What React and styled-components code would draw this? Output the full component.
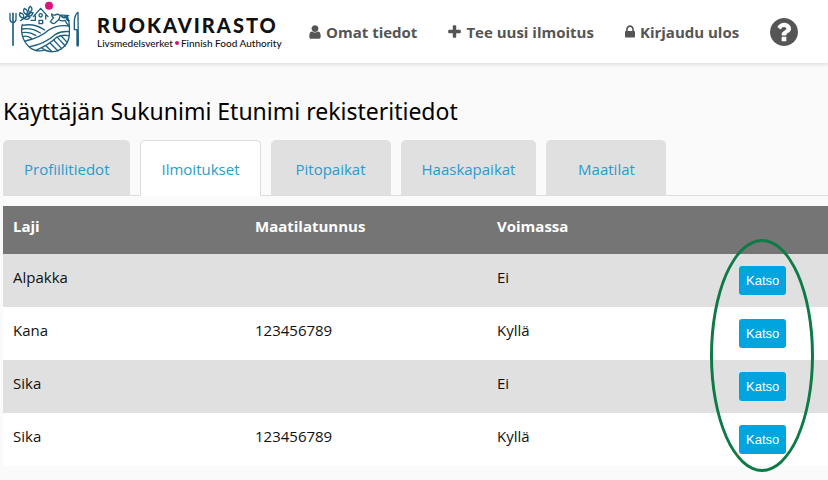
import React from "react";
import styled, { createGlobalStyle } from "styled-components";

const GlobalStyle = createGlobalStyle`
  * { box-sizing: border-box; }
  body {
    margin: 0;
    background: #fafafa;
    color: #111;
    font-family: "Open Sans", "Noto Sans", sans-serif;
    font-size: 15px;
    line-height: 24px;
  }
`;

const Header = styled.header`
  display: flex;
  align-items: center;
  gap: 32px;
  height: 63px;
  padding: 0 8px;
  background: #fff;
  box-shadow: 0 1px 3px 1px #e2e2e2;
`;

const Brand = styled.a`
  display: flex;
  align-items: center;
  gap: 17px;
  color: #111;
  text-decoration: none;
`;

const Emblem = styled.svg`
  width: 72px;
  height: 53px;
  margin-bottom: 8px;
  fill: none;
  stroke: #1d5f80;
  stroke-width: 4;
  stroke-linecap: round;
  stroke-linejoin: round;
`;

const BrandText = styled.span`
  display: flex;
  flex-direction: column;
  width: 180px;
  padding-top: 2px;
  font-family: Lato, sans-serif;
  white-space: nowrap;
`;

const BrandName = styled.span`
  font-size: 20px;
  font-weight: 900;
  line-height: 20px;
  letter-spacing: 2px;
`;

const BrandSub = styled.span`
  display: flex;
  align-items: center;
  gap: 2px;
  font-size: 10px;
  font-weight: 500;
  line-height: 16px;
`;

const Dot = styled.span`
  flex: none;
  width: 4px;
  height: 4px;
  border-radius: 50%;
  background: #d4146e;
`;

const Nav = styled.nav`
  display: flex;
  align-items: center;
  gap: 31px;
`;

const NavLink = styled.a`
  display: flex;
  align-items: center;
  gap: 5px;
  color: #555;
  font-weight: 700;
  text-decoration: none;
  white-space: nowrap;
`;

const Glyph = styled.svg`
  width: ${(p) => p.$width}px;
  height: ${(p) => p.$height}px;
  fill: currentColor;
`;

const Main = styled.main`
  padding: 32px 0 14px 3px;
`;

const Title = styled.h1`
  margin: 0;
  color: #000;
  font-family: "Noto Sans", sans-serif;
  font-size: 23px;
  font-weight: 400;
  line-height: 32px;
`;

const Tabs = styled.div`
  display: flex;
  gap: 10px;
  margin-top: 13px;
  border-bottom: 1px solid #ddd;
`;

const Tab = styled.button`
  min-width: 120px;
  height: 56px;
  margin-bottom: -1px;
  padding: 2px 20px 0;
  border: 1px solid ${(p) => (p.$active ? "#ddd" : "#e0e0e0")};
  border-bottom-color: ${(p) => (p.$active ? "#fff" : "#ddd")};
  border-radius: 5px 5px 0 0;
  background: ${(p) => (p.$active ? "#fff" : "#e0e0e0")};
  color: #2b9bcb;
  font: inherit;
  cursor: pointer;
`;

const TableArea = styled.div`
  position: relative;
  margin-top: 10px;
`;

const Table = styled.table`
  width: 100%;
  table-layout: fixed;
  border-collapse: collapse;
`;

const Column = styled.col`
  width: ${(p) => (p.$rest ? "auto" : "242px")};
`;

const HeadCell = styled.th`
  height: 48px;
  padding: 8px 10px;
  background: #757575;
  color: #fff;
  font-weight: 700;
  text-align: left;
  vertical-align: top;
`;

const Row = styled.tr`
  height: 53px;
  background: #fff;
  &:nth-child(odd) { background: #e0e0e0; }
`;

const Cell = styled.td`
  padding: ${(p) => (p.$action ? 12 : 11)}px 10px;
  vertical-align: top;
`;

const ViewButton = styled.button`
  display: block;
  height: 29px;
  padding: 0 7px;
  border: 0;
  border-radius: 3px;
  background: #00a5df;
  color: #fff;
  font-family: "Liberation Sans", Arial, sans-serif;
  font-size: 13px;
  cursor: pointer;
`;

const Highlight = styled.div`
  position: absolute;
  top: 33px;
  left: 707px;
  width: 104px;
  height: 233px;
  border: 3px solid #0c7b45;
  border-radius: 50%;
  pointer-events: none;
`;

const icons = {
  user: {
    box: "256 0 1280 1792",
    width: 12,
    d: "M1536 1399q0 109-62.5 187t-150.5 78h-854q-88 0-150.5-78t-62.5-187q0-85 8.5-160.5t31.5-152 58.5-131 94-89 134.5-34.5q131 128 313 128t313-128q76 0 134.5 34.5t94 89 58.5 131 31.5 152 8.5 160.5zm-256-887q0 159-112.5 271.5t-271.5 112.5-271.5-112.5-112.5-271.5 112.5-271.5 271.5-112.5 271.5 112.5 112.5 271.5z",
  },
  plus: {
    box: "192 0 1408 1792",
    width: 13,
    d: "M1600 736v192q0 40-28 68t-68 28h-416v416q0 40-28 68t-68 28h-192q-40 0-68-28t-28-68v-416h-416q-40 0-68-28t-28-68v-192q0-40 28-68t68-28h416v-416q0-40 28-68t68-28h192q40 0 68 28t28 68v416h416q40 0 68 28t28 68z",
  },
  lock: {
    box: "320 0 1152 1792",
    width: 10,
    d: "M640 768h512v-192q0-106-75-181t-181-75-181 75-75 181v192zm832 96v576q0 40-28 68t-68 28h-960q-40 0-68-28t-28-68v-576q0-40 28-68t68-28h32v-192q0-184 132-316t316-132 316 132 132 316v192h32q40 0 68 28t28 68z",
  },
  help: {
    box: "128 128 1536 1536",
    width: 28,
    height: 28,
    d: "M1024 1376v-192q0-14-9-23t-23-9h-192q-14 0-23 9t-9 23v192q0 14 9 23t23 9h192q14 0 23-9t9-23zm256-672q0-88-55.5-163t-138.5-116-170-41q-243 0-371 213-15 24 8 42l132 100q7 6 19 6 16 0 25-12 53-68 86-92 34-24 86-24 48 0 85.5 26t37.5 59q0 38-20 61t-68 45q-63 28-115.5 86.5t-52.5 125.5v36q0 14 9 23t23 9h192q14 0 23-9t9-23q0-19 21.5-49.5t54.5-49.5q32-18 49-28.5t46-35 44.5-48 28-60.5 12.5-81zm384 192q0 209-103 385.5t-279.5 279.5-385.5 103-385.5-103-279.5-279.5-103-385.5 103-385.5 279.5-279.5 385.5-103 385.5 103 279.5 279.5 103 385.5z",
  },
};

function Icon({ name }) {
  const { box, width, height = 16, d } = icons[name];
  return (
    <Glyph viewBox={box} $width={width} $height={height} aria-hidden="true">
      <path d={d} />
    </Glyph>
  );
}

function FoodEmblem() {
  return (
    <Emblem viewBox="24 7 216 159" aria-hidden="true">
      {/* fork */}
      <path d="M30 44v18q0 9 9 10q9-1 9-10V44" />
      <path d="M39 44v96" strokeWidth="5" />
      {/* knife */}
      <path d="M234 41q-11 8-11 30v22h8v46q0 3 2 3t2-3z" />
      {/* wheat */}
      <path d="M62 66Q78 57 88 42" />
      <path d="M89 42q-8-9 2-19q11 9-2 19zM80 48q-14-7-7-19q14 6 7 19zM70 59q-15-5-10-17q15 4 10 17zM84 51q4-11 15-9q-3 13-15 9zM73 60q6-10 17-5q-5 11-17 5z" />
      {/* barn */}
      <path d="M93 65l10 0M100 54l22-25 22 25M106 51v14M137 51v10" />
      <circle cx="122" cy="50" r="5" />
      <path d="M117 65h11v10h-11z" />
      {/* cow */}
      <path d="M155 46q5 5 11 3q6-5 13 1q13-2 27 1M155 46q0 9 6 11l-10 12q6 8 14 4l10-9q4-4 5-12M178 64q8 5 17 1q5 13 13 17" />
      <path d="M184 51q4 8 12 4M201 54q-3 9 5 12" strokeWidth="6" />
      {/* plate outline */}
      <path d="M67 77C61 98 67 126 87 144Q105 160 126 156Q134 152 143 157Q170 164 190 146Q210 128 208 98Q210 73 202 53" />
      {/* field furrows */}
      <path d="M68 80q35-7 66 14M67 91q28-5 54 12M68 102q20-4 39 8M70 113q13-2 24 6M76 127q45-10 70-33q28-17 61-12M89 144q46-9 76-36q19-12 43-9M107 155q40-16 63-39q15-9 36-5" />
      <path d="M126 148l14 9M138 141l18 18M150 133l24 24M161 124l24 26M172 116l24 26M184 112l18 20" />
      <circle cx="147" cy="21" r="12" fill="#e0127b" stroke="none" />
    </Emblem>
  );
}

const tabs = ["Profiilitiedot", "Ilmoitukset", "Pitopaikat", "Haaskapaikat", "Maatilat"];
const rows = [
  ["Alpakka", "", "Ei"],
  ["Kana", "123456789", "Kyllä"],
  ["Sika", "", "Ei"],
  ["Sika", "123456789", "Kyllä"],
];

export default function App() {
  return (
    <>
      <GlobalStyle />
      <Header>
        <Brand href="#">
          <FoodEmblem />
          <BrandText>
            <BrandName>RUOKAVIRASTO</BrandName>
            <BrandSub>
              Livsmedelsverket <Dot /> Finnish Food Authority
            </BrandSub>
          </BrandText>
        </Brand>
        <Nav>
          <NavLink href="#"><Icon name="user" />Omat tiedot</NavLink>
          <NavLink href="#"><Icon name="plus" />Tee uusi ilmoitus</NavLink>
          <NavLink href="#"><Icon name="lock" />Kirjaudu ulos</NavLink>
          <NavLink href="#" aria-label="Ohje"><Icon name="help" /></NavLink>
        </Nav>
      </Header>
      <Main>
        <Title>Käyttäjän Sukunimi Etunimi rekisteritiedot</Title>
        <Tabs role="tablist">
          {tabs.map((name) => (
            <Tab key={name} role="tab" aria-selected={name === "Ilmoitukset"} $active={name === "Ilmoitukset"}>
              {name}
            </Tab>
          ))}
        </Tabs>
        <TableArea>
          <Table>
            <colgroup>
              <Column />
              <Column />
              <Column />
              <Column $rest />
            </colgroup>
            <thead>
              <tr>
                <HeadCell>Laji</HeadCell>
                <HeadCell>Maatilatunnus</HeadCell>
                <HeadCell>Voimassa</HeadCell>
                <HeadCell />
              </tr>
            </thead>
            <tbody>
              {rows.map(([species, farm, valid], i) => (
                <Row key={i}>
                  <Cell>{species}</Cell>
                  <Cell>{farm}</Cell>
                  <Cell>{valid}</Cell>
                  <Cell $action><ViewButton>Katso</ViewButton></Cell>
                </Row>
              ))}
            </tbody>
          </Table>
          <Highlight />
        </TableArea>
      </Main>
    </>
  );
}
